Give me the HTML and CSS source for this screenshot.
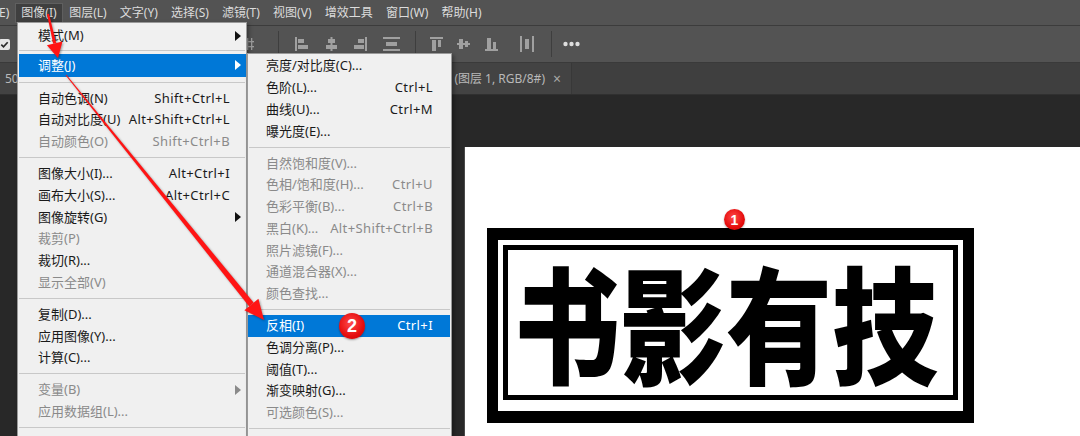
FILE: index.html
```html
<!DOCTYPE html>
<html lang="zh-CN">
<head>
<meta charset="utf-8">
<title>图像 调整 反相</title>
<link rel="stylesheet" href="styles.css">
</head>
<body>
<div class="menubar">
  <span class="mi cut">E)</span>
  <span class="mi active">图像(I)</span>
  <span class="mi">图层(L)</span>
  <span class="mi">文字(Y)</span>
  <span class="mi">选择(S)</span>
  <span class="mi">滤镜(T)</span>
  <span class="mi">视图(V)</span>
  <span class="mi">增效工具</span>
  <span class="mi">窗口(W)</span>
  <span class="mi">帮助(H)</span>
</div>

<div class="optbar">
  <svg class="chk" width="11" height="11" viewBox="0 0 11 11"><rect width="11" height="11" rx="2" fill="#e6e6e6"/><path d="M2.3 5.6 L4.5 7.8 L8.7 3.2" stroke="#2b2b2b" stroke-width="1.7" fill="none"/></svg>
  <svg class="grid" width="8" height="14" viewBox="0 0 8 14"><rect x="1" y="1" width="1.3" height="12" fill="#9d9d9d"/><rect x="5" y="1" width="1.3" height="12" fill="#9d9d9d"/><rect x="0" y="4" width="8" height="1.3" fill="#9d9d9d"/><rect x="0" y="9" width="8" height="1.3" fill="#9d9d9d"/></svg>
  <span class="vsep s1"></span>
  <svg class="ic i1" width="13" height="14" viewBox="0 0 13 14"><rect x="0" y="0" width="2" height="14"/><rect x="3" y="2" width="6" height="4"/><rect x="3" y="8" width="10" height="4"/></svg>
  <svg class="ic i2" width="13" height="14" viewBox="0 0 13 14"><rect x="5.5" y="0" width="2" height="14"/><rect x="3" y="2" width="7" height="4"/><rect x="1" y="8" width="11" height="4"/></svg>
  <svg class="ic i3" width="13" height="14" viewBox="0 0 13 14"><rect x="11" y="0" width="2" height="14"/><rect x="4" y="2" width="6" height="4"/><rect x="0" y="8" width="10" height="4"/></svg>
  <svg class="ic i4" width="17" height="14" viewBox="0 0 17 14"><rect x="0" y="0" width="17" height="2"/><rect x="3" y="5" width="11" height="4"/><rect x="0" y="12" width="17" height="2"/></svg>
  <span class="vsep s2"></span>
  <svg class="ic i5" width="13" height="14" viewBox="0 0 13 14"><rect x="0" y="0" width="13" height="2"/><rect x="2" y="3" width="4" height="11"/><rect x="8" y="3" width="3" height="7"/></svg>
  <svg class="ic i6" width="13" height="14" viewBox="0 0 13 14"><rect x="0" y="6" width="13" height="2"/><rect x="2" y="2" width="4" height="10"/><rect x="8" y="4" width="3" height="6"/></svg>
  <svg class="ic i7" width="13" height="14" viewBox="0 0 13 14"><rect x="0" y="12" width="13" height="2"/><rect x="2" y="1" width="4" height="11"/><rect x="8" y="5" width="3" height="7"/></svg>
  <svg class="ic i8" width="14" height="16" viewBox="0 0 14 16"><rect x="0" y="0" width="2" height="16"/><rect x="5" y="3" width="4" height="10"/><rect x="12" y="0" width="2" height="16"/></svg>
  <span class="vsep s3"></span>
  <svg class="dots" width="17" height="6" viewBox="0 0 17 6"><circle cx="2.5" cy="3" r="2.2"/><circle cx="8.5" cy="3" r="2.2"/><circle cx="14.5" cy="3" r="2.2"/></svg>
</div>

<div class="tabbar">
  <div class="tab">
    <span class="tab-name">50</span>
    <span class="tab-info">(图层 1, RGB/8#)</span>
    <span class="tab-close">×</span>
  </div>
</div>

<div class="work">
  <div class="canvas">
    <div class="logo">
      <div class="logo-in">
        <div class="logo-text">书影有技</div>
      </div>
      <span class="badge b1">1</span>
    </div>
  </div>
</div>

<div class="menu main">
  <div class="item"><span>模式(M)</span><i class="arr"></i></div>
  <div class="sep sep-a"></div>
  <div class="item hl tall"><span>调整(J)</span><i class="arr"></i></div>
  <div class="sep sep-b"></div>
  <div class="item"><span>自动色调(N)</span><span class="kb">Shift+Ctrl+L</span></div>
  <div class="item"><span>自动对比度(U)</span><span class="kb">Alt+Shift+Ctrl+L</span></div>
  <div class="item off"><span>自动颜色(O)</span><span class="kb">Shift+Ctrl+B</span></div>
  <div class="sep"></div>
  <div class="item"><span>图像大小(I)...</span><span class="kb">Alt+Ctrl+I</span></div>
  <div class="item"><span>画布大小(S)...</span><span class="kb">Alt+Ctrl+C</span></div>
  <div class="item"><span>图像旋转(G)</span><i class="arr"></i></div>
  <div class="item off"><span>裁剪(P)</span></div>
  <div class="item"><span>裁切(R)...</span></div>
  <div class="item off"><span>显示全部(V)</span></div>
  <div class="sep"></div>
  <div class="item"><span>复制(D)...</span></div>
  <div class="item"><span>应用图像(Y)...</span></div>
  <div class="item"><span>计算(C)...</span></div>
  <div class="sep"></div>
  <div class="item off"><span>变量(B)</span><i class="arr"></i></div>
  <div class="item off"><span>应用数据组(L)...</span></div>
  <div class="sep"></div>
</div>

<div class="menu sub">
  <div class="item"><span>亮度/对比度(C)...</span></div>
  <div class="item"><span>色阶(L)...</span><span class="kb">Ctrl+L</span></div>
  <div class="item"><span>曲线(U)...</span><span class="kb">Ctrl+M</span></div>
  <div class="item"><span>曝光度(E)...</span></div>
  <div class="sep"></div>
  <div class="item off"><span>自然饱和度(V)...</span></div>
  <div class="item off"><span>色相/饱和度(H)...</span><span class="kb">Ctrl+U</span></div>
  <div class="item off"><span>色彩平衡(B)...</span><span class="kb">Ctrl+B</span></div>
  <div class="item off"><span>黑白(K)...</span><span class="kb">Alt+Shift+Ctrl+B</span></div>
  <div class="item off"><span>照片滤镜(F)...</span></div>
  <div class="item off"><span>通道混合器(X)...</span></div>
  <div class="item off"><span>颜色查找...</span></div>
  <div class="sep"></div>
  <div class="item hl"><span>反相(I)</span><span class="kb">Ctrl+I</span><span class="badge b2">2</span></div>
  <div class="item"><span>色调分离(P)...</span></div>
  <div class="item"><span>阈值(T)...</span></div>
  <div class="item"><span>渐变映射(G)...</span></div>
  <div class="item off"><span>可选颜色(S)...</span></div>
  <div class="sep"></div>
</div>

<svg class="arrows" width="1080" height="436" viewBox="0 0 1080 436">
  <g fill="#ff1414">
    <polygon points="49,13.8 47,14.2 53.2,43.7 56.2,43.1"/>
    <polygon points="58,58 46.9,45.2 62.5,41.6"/>
    <polygon points="66.4,74.7 65.6,75.3 249.2,306.4 253.6,302.6"/>
    <polygon points="264,320 244.4,310.2 258.4,298.8"/>
  </g>
</svg>
</body>
</html>
```

FILE: styles.css
```css
* { box-sizing: border-box; }

body {
  margin: 0;
  width: 1080px;
  height: 436px;
  overflow: hidden;
  position: relative;
  background: #282828;
  font-family: "Noto Sans", "Noto Sans CJK SC", sans-serif;
}

/* ---------- menu bar ---------- */
.menubar {
  height: 26px;
  background: #535353;
  border-bottom: 1px solid #3c3c3c;
  display: flex;
  align-items: center;
  font-size: 12px;
  color: #dcdcdc;
  line-height: 1;
}
.mi {
  height: 20px;
  padding: 0 6.6px;
  display: flex;
  align-items: center;
  white-space: nowrap;
}
.mi.cut { padding: 0 6px 0 0; margin-left: -1px; }
.mi.active {
  background: #3f3f3f;
  border: 1px solid #5f5f5f;
  padding: 0 5px;
}

/* ---------- options bar ---------- */
.optbar {
  height: 37px;
  background: #535353;
  border-bottom: 1px solid #3a3a3a;
  display: flex;
  align-items: center;
}
.optbar .ic { fill: #a0a0a0; flex: none; }
.chk { flex: none; margin-left: -1px; }
.grid { flex: none; margin-left: 236px; }
.vsep { width: 1px; height: 26px; background: #3e3e3e; flex: none; }
.vsep.s1 { margin-left: 24px; }
.i1 { margin-left: 16px; }
.i2 { margin-left: 17px; }
.i3 { margin-left: 16px; }
.i4 { margin-left: 16px; }
.vsep.s2 { margin-left: 15px; }
.i5 { margin-left: 14px; }
.i6 { margin-left: 14px; }
.i7 { margin-left: 15px; }
.i8 { margin-left: 22px; }
.vsep.s3 { margin-left: 17px; }
.dots { fill: #dedede; margin-left: 11px; flex: none; }

/* ---------- tab bar ---------- */
.tabbar {
  height: 32px;
  background: #3f3f3f;
  border-bottom: 1px solid #303030;
  display: flex;
}
.tab {
  width: 572px;
  background: #434343;
  border-right: 1px solid #383838;
  display: flex;
  align-items: center;
  padding: 0 10px 0 5px;
  font-size: 12px;
  color: #b9b9b9;
  line-height: 1;
}
.tab-name { flex: 1; }
.tab-info { white-space: nowrap; }
.tab-close { margin-left: 8px; font-size: 14px; color: #a8a8a8; }

/* ---------- workspace / canvas ---------- */
.work {
  height: 341px;
  background: #282828;
  padding: 52px 0 0 464px;
}
.canvas {
  height: 100%;
  background: #ffffff;
  border-left: 1px solid #4a4a4a;
  padding: 81px 0 0 22px;
}
.logo {
  position: relative;
  width: 487px;
  height: 195px;
  border-style: solid;
  border-color: #000;
  border-width: 12px 11px 12px 11px;
  padding: 5px 5px 11px 5px;
}
.logo-in {
  width: 100%;
  height: 100%;
  border: 5px solid #000;
  display: flex;
  align-items: center;
  justify-content: center;
  overflow: visible;
}
.logo-text {
  flex: none;
  font-family: "Noto Sans CJK SC", sans-serif;
  font-weight: 900;
  font-size: 127px;
  line-height: 1;
  color: #000;
  white-space: nowrap;
  transform: translate(-5px, -2px) scaleX(0.835);
}

/* ---------- badges ---------- */
.badge {
  position: absolute;
  border-radius: 50%;
  background: radial-gradient(circle at 45% 40%, #ff4a4a 0%, #e50d0d 60%, #c40000 100%);
  color: #fff;
  font-family: "Liberation Sans", sans-serif;
  font-weight: 700;
  display: flex;
  align-items: center;
  justify-content: center;
  line-height: 1;
  box-shadow: 0 1px 2px rgba(0,0,0,.35);
}
.b1 {
  width: 21px;
  height: 21px;
  left: 226px;
  top: -31px;
  font-size: 14px;
}
.b2 {
  width: 26px;
  height: 26px;
  left: 91px;
  top: -2px;
  font-size: 18px;
}

/* ---------- dropdown menus ---------- */
.menu {
  position: absolute;
  background: #f0f0f0;
  border: 1px solid #9a9a9a;
  box-shadow: 2px 2px 4px rgba(0,0,0,.35);
  font-size: 13px;
  color: #1a1a1a;
  line-height: 1;
}
.menu.main {
  left: 17px;
  top: 22px;
  width: 230px;
  height: 440px;
  padding-top: 2px;
}
.menu.sub {
  left: 247px;
  top: 53px;
  width: 205px;
  height: 400px;
  padding-top: 1.1px;
}
.item {
  position: relative;
  height: 21.75px;
  display: flex;
  align-items: center;
  justify-content: space-between;
  white-space: nowrap;
}
.kb { letter-spacing: 0.4px; }
.main .item { padding: 0 16px 0 20px; }
.sub .item { padding: 0 18px 0 18px; }
.item.off { color: #8a8a8a; }
.item.tall { height: 23px; }
.main .item.hl { margin-left: 1px; padding-left: 19px; }
.sub .item.hl { margin-right: 1px; padding-right: 17px; }
.item.hl { background: #0078d7; color: #fff; }

.arr {
  width: 0;
  height: 0;
  border-top: 5px solid transparent;
  border-bottom: 5px solid transparent;
  border-left: 6px solid #111;
  margin-right: -11px;
}
.item.hl .arr { border-left-color: #fff; }
.item.off .arr { border-left-color: #8a8a8a; }

.sep {
  height: 10.25px;
  display: flex;
  align-items: center;
}
.sep::before {
  content: "";
  flex: 1;
  height: 1px;
  background: #c8c8c8;
  margin: 0 1px;
}
.sep.sep-a { height: 7px; }
.sep.sep-b { height: 10.5px; }

/* ---------- annotation arrows ---------- */
.arrows {
  position: absolute;
  left: 0;
  top: 0;
  pointer-events: none;
  filter: drop-shadow(1px 1px 1px rgba(0,0,0,.35));
}
```
